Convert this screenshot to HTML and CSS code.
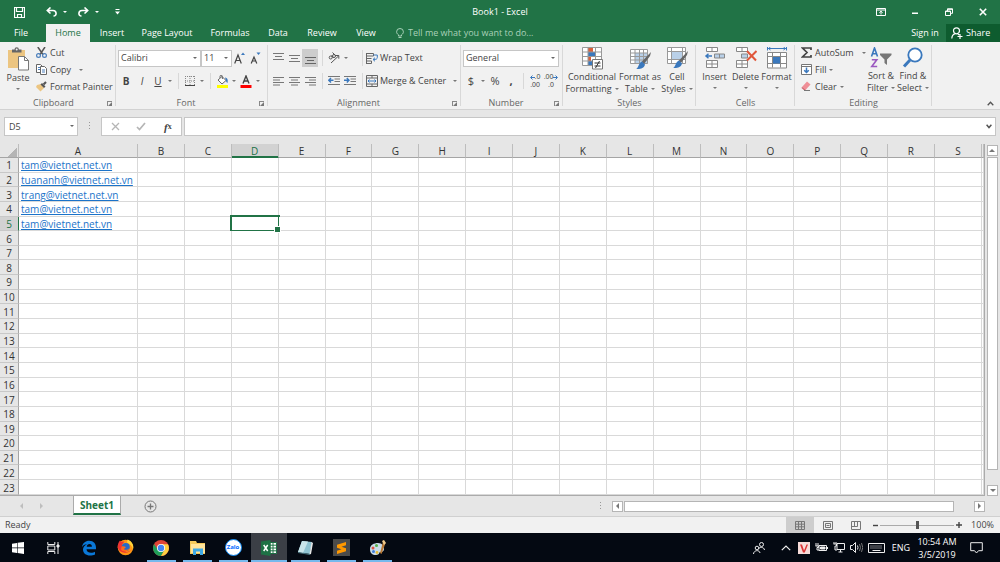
FILE: index.html
```html
<!DOCTYPE html>
<html lang="en">
<head>
<meta charset="utf-8">
<title>Book1 - Excel</title>
<link rel="stylesheet" href="styles.css">
</head>
<body>
<header class="titlebar">
  <div class="quick">
    <button class="q-save" aria-label="Save"><svg width="11" height="11" viewBox="0 0 11 11" fill="none" stroke="#fff"><path d="M.5 .5h10v10h-10zM2.500 .5v4h6v-4M3.500 10.500v-3h4v3" stroke-width="1.200"/></svg></button>
    <button class="q-undo" aria-label="Undo"><svg width="11" height="10" viewBox="0 0 11 10" fill="none" stroke="#fff" stroke-width="1.600"><path d="M4.500 .5L1.300 3.500l3.200 3M1.500 3.500H7c4 0 4 5.500 .5 5.500"/></svg></button>
    <span class="caret light"></span>
    <button class="q-redo" aria-label="Redo"><svg width="11" height="10" viewBox="0 0 11 10" fill="none" stroke="#fff" stroke-width="1.600"><path d="M6.500 .5l3.200 3-3.200 3M9.500 3.500H4c-4 0-4 5.500-.5 5.500"/></svg></button>
    <span class="caret light"></span>
    <button class="q-more" aria-label="Customize"><svg width="5" height="6" viewBox="0 0 5 6" fill="#fff"><path d="M.5 0h4v1h-4zM0 2.500h5L2.500 5.500z"/></svg></button>
  </div>
  <h1>Book1 - Excel</h1>
  <div class="winbtns">
    <button aria-label="Ribbon options"><svg width="10" height="8" viewBox="0 0 10 8" fill="none" stroke="#fff"><path d="M.5 .5h9v7h-9zM.5 2h9M5 6.500V3.200M3.300 4.800L5 3.200l1.700 1.600"/></svg></button>
    <button aria-label="Minimize"><svg width="8" height="8" viewBox="0 0 8 8"><path d="M1 4.500h6v1.500H1z" fill="#fff"/></svg></button>
    <button aria-label="Restore"><svg width="8" height="8" viewBox="0 0 8 8" fill="none" stroke="#fff"><path d="M.5 3h5v4.500h-5zM2.500 3V.8h5v4.500h-2M2.500 1.300h5M.5 3.400h5"/></svg></button>
    <button aria-label="Close"><svg width="8" height="8" viewBox="0 0 8 8" stroke="#fff" stroke-width="1.600"><path d="M.8 .8l6.400 6.400M7.200 .8L.8 7.200"/></svg></button>
  </div>
</header>

<nav class="tabs">
  <a href="#file" class="t-file">File</a>
  <a href="#home" class="active">Home</a>
  <a href="#insert" class="t-insert">Insert</a>
  <a href="#layout" class="t-layout">Page Layout</a>
  <a href="#formulas" class="t-formulas">Formulas</a>
  <a href="#data" class="t-data">Data</a>
  <a href="#review" class="t-review">Review</a>
  <a href="#view" class="t-view">View</a>
  <label class="tell"><svg width="8" height="11" viewBox="0 0 8 11" fill="none" stroke="#a9d1b9"><path d="M2.500 8V6.800C1 5.800 .6 4.800 .6 3.800a3.400 3.300 0 0 1 6.800 0c0 1-.4 2-1.900 3V8zM2.500 9.500h3"/></svg><input type="text" placeholder="Tell me what you want to do..." aria-label="Tell me what you want to do"></label>
  <a href="#signin" class="signin">Sign in</a>
  <button class="share"><svg width="12" height="12" viewBox="0 0 12 12" fill="none" stroke="#fff" stroke-width="1.200"><circle cx="5.500" cy="3.800" r="3"/><path d="M.8 11.500C1 8.500 2.500 7 4.500 6.700M6.500 6.600L8.200 8M6.500 9.500h5M9 7v5"/></svg>Share</button>
</nav>

<section class="ribbon">
  <div class="group g-clip">
    <div class="body">
      <button class="big paste"><svg width="23" height="24" viewBox="0 0 23 24"><path d="M1 3h17v18H1z" fill="#ecc581"/><path d="M5 2.500h2.500a2.200 2.200 0 0 1 4.400 0H14.500v3H5z" fill="#666"/><circle cx="9.700" cy="2.500" r="1" fill="#f1f1f1"/><path d="M11.500 9.500h6l4 4v9.500h-10z" fill="#fff" stroke="#777"/><path d="M17.500 9.500v4h4" fill="none" stroke="#777"/></svg><span>Paste</span><i class="caret"></i></button>
      <div class="stack">
        <button><svg width="11" height="11" viewBox="0 0 11 11" fill="none"><path d="M1.800 0L7 7.500M9 0L4 7.500" stroke="#555" stroke-width="1.500"/><circle cx="2.500" cy="8.500" r="1.900" stroke="#4a7ebb" stroke-width="1.200"/><circle cx="8.500" cy="8.500" r="1.900" stroke="#4a7ebb" stroke-width="1.200"/></svg>Cut</button>
        <button><svg width="11" height="11" viewBox="0 0 11 11" fill="#fff" stroke="#666"><path d="M.5 .5h4l2 2v6h-6z"/><path d="M2 3.500h2.500M2 5.500h2" stroke="#4a7ebb"/><path d="M4.500 2.500h4l2 2v6h-6z"/><path d="M6 6h3M6 8h3" stroke="#4a7ebb"/></svg>Copy<i class="caret c-copy"></i></button>
        <button><svg width="11" height="11" viewBox="0 0 11 11"><path d="M1 4l4-1 3 4-3.500 3.500L0 6z" fill="#ecc581"/><path d="M4.500 3.500l1.500-1.500 3.500 3.500-1.500 1.500z" fill="#555"/><path d="M7.500 3.500L10 1" stroke="#555" stroke-width="2.200"/></svg>Format Painter</button>
      </div>
    </div>
    <footer>Clipboard<b class="launch"></b></footer>
  </div>

  <div class="group g-font">
    <div class="body rows">
      <div class="row">
        <span class="pick p-font"><select aria-label="Font"><option>Calibri</option></select></span>
        <span class="pick p-size"><select aria-label="Font size"><option>11</option></select></span>
        <button class="w16" aria-label="Increase font size"><svg width="12" height="12" viewBox="0 0 12 12" fill="none"><path d="M.7 11.500L4 3l3.300 8.500M2 8.500h4" stroke="#444" stroke-width="1.200"/><path d="M7 3l2-2.500L11 3z" fill="#3a78bd"/></svg></button>
        <button class="w16" aria-label="Decrease font size"><svg width="12" height="12" viewBox="0 0 12 12" fill="none"><path d="M1.200 11.500L4 5l2.800 6.500M2.300 9h3.500" stroke="#444" stroke-width="1.200"/><path d="M6.500 .5h4L8.500 3z" fill="#3a78bd"/></svg></button>
      </div>
      <div class="row">
        <button class="w16 glyph"><b>B</b></button><button class="w16 glyph"><em>I</em></button><button class="w16 glyph"><u>U</u></button><button class="w8"><i class="caret"></i></button>
        <span class="sep"></span>
        <button class="w16"><svg width="10" height="10" viewBox="0 0 10 10" fill="none" stroke="#888"><path d="M.5 0v9M5 0v9M9.500 0v9M0 .5h10M0 5h10" stroke-dasharray="1 1"/><path d="M0 9.500h10" stroke="#444"/></svg></button><button class="w8"><i class="caret"></i></button>
        <span class="sep"></span>
        <button class="w16"><svg width="13" height="13" viewBox="0 0 13 13"><path d="M2 5l4-3.500 4 4L6 9z" fill="#fff" stroke="#666"/><path d="M4 3V1.500a1.200 1.200 0 0 1 2.400 0V4" fill="none" stroke="#666"/><path d="M9 2.500c3 .5 3 3 2.500 5.500C10 7 10 6 9.800 5z" fill="#3a78bd"/><path d="M1 10h11v3H1z" fill="#ffff00"/></svg></button><button class="w8"><i class="caret"></i></button>
        <button class="w16"><svg width="12" height="13" viewBox="0 0 12 13"><path d="M3 8.500L6 1l3 7.500M4 6h4" fill="none" stroke="#444" stroke-width="1.400"/><path d="M.5 10h11v3H.5z" fill="#f00"/></svg></button><button class="w8"><i class="caret"></i></button>
      </div>
    </div>
    <footer>Font<b class="launch"></b></footer>
  </div>

  <div class="group g-align">
    <div class="body rows">
      <div class="row">
        <button class="w16"><svg width="11" height="11" viewBox="0 0 11 11" stroke="#777"><path d="M0 .5h11M2 3.500h7M0 6.500h11"/></svg></button>
        <button class="w16"><svg width="11" height="11" viewBox="0 0 11 11" stroke="#777"><path d="M0 2.500h11M2 5.500h7M0 8.500h11"/></svg></button>
        <button class="w16 on"><svg width="11" height="11" viewBox="0 0 11 11" stroke="#666"><path d="M0 4.500h11M2 7.500h7M0 10.500h11"/></svg></button>
        <span class="sep"></span>
        <button class="w16"><svg width="12" height="12" viewBox="0 0 12 12" fill="none" stroke="#555"><path d="M3 11l7.500-7M7.500 3.500h3.300v3.200"/><circle cx="2.700" cy="5.500" r="1.500"/><path d="M3.500 3.500l2 2.500M4.500 .5l3.500 3.500"/><circle cx="6" cy="4" r="1.500"/></svg></button><button class="w8"><i class="caret"></i></button>
        <span class="sep s-wide"></span>
        <button class="lab"><svg width="12" height="11" viewBox="0 0 12 11" fill="none"><path d="M.5 .5h7v2.500h-7zM.5 5.500h5M.5 8h5v2.500h-5zM.5 0v11" stroke="#666"/><path d="M7.500 2h3.800v2.500c0 1.500-1 2-4 2M9 4.700L7 6.500l2 1.800" stroke="#3a78bd"/></svg>Wrap Text</button>
      </div>
      <div class="row">
        <button class="w16"><svg width="11" height="9" viewBox="0 0 11 9" stroke="#777"><path d="M0 .5h11M0 3h7M0 5.500h11M0 8h7"/></svg></button>
        <button class="w16"><svg width="11" height="9" viewBox="0 0 11 9" stroke="#777"><path d="M0 .5h11M2 3h7M0 5.500h11M2 8h7"/></svg></button>
        <button class="w16"><svg width="11" height="9" viewBox="0 0 11 9" stroke="#777"><path d="M0 .5h11M4 3h7M0 5.500h11M4 8h7"/></svg></button>
        <span class="sep"></span>
        <button class="w16"><svg width="12" height="10" viewBox="0 0 12 10" fill="none"><path d="M0 .5h12M6.500 3h5.500M6.500 5.500h5.500M0 8.500h12" stroke="#777"/><path d="M5.500 4.200H1M3 2L.8 4.200 3 6.500" stroke="#3a78bd" stroke-width="1.400"/></svg></button>
        <button class="w16"><svg width="12" height="10" viewBox="0 0 12 10" fill="none"><path d="M0 .5h12M6.500 3h5.500M6.500 5.500h5.500M0 8.500h12" stroke="#777"/><path d="M0 4.200h4.500M2.800 2L5 4.200 2.800 6.500" stroke="#3a78bd" stroke-width="1.400"/></svg></button>
        <span class="sep"></span>
        <button class="lab"><svg width="12" height="12" viewBox="0 0 12 12" fill="none"><path d="M.5 .5h11v11H.5zM.5 3h11M.5 9h11M6 0v3M6 9v3" stroke="#666"/><path d="M2 6h8M3.500 4.500L2 6l1.500 1.500M8.500 4.500L10 6 8.500 7.500" stroke="#3a78bd"/></svg>Merge &amp; Center<i class="caret c-merge"></i></button>
      </div>
    </div>
    <footer>Alignment<b class="launch"></b></footer>
  </div>

  <div class="group g-num">
    <div class="body rows">
      <div class="row"><span class="pick p-num"><select aria-label="Number format"><option>General</option></select></span></div>
      <div class="row">
        <button class="w16 sym">$</button><button class="w8"><i class="caret"></i></button><button class="w16 sym">%</button><button class="w16 sym"><b>,</b></button>
        <span class="sep"></span>
        <button class="w16 dec" aria-label="Increase decimal"><svg width="5" height="5" viewBox="0 0 5 5" fill="none" stroke="#3a78bd"><path d="M5 2.500H1M2.500 .5l-2 2 2 2"/></svg><span>.0</span><span>.00</span></button>
        <button class="w16 dec" aria-label="Decrease decimal"><span>.00</span><svg width="5" height="5" viewBox="0 0 5 5" fill="none" stroke="#3a78bd"><path d="M0 2.500h4M2.500 .5l2 2-2 2"/></svg><span>.0</span></button>
      </div>
    </div>
    <footer>Number<b class="launch"></b></footer>
  </div>

  <div class="group g-styles">
    <div class="body">
      <button class="big b-cond"><svg width="23" height="23" viewBox="0 0 23 23"><path d="M1.500 .5h19v18h-19z" fill="#fff"/><path d="M7 0h5v5H7zM7 10h3v4H7z" fill="#d9603b"/><path d="M7 5h8v5H7zM7 14h4v4H7z" fill="#3a78bd"/><path d="M1.500 .5h19v18h-19zM7 0v18M14.500 0v18M1 5h20M1 9.500h20M1 14h20" fill="none" stroke="#999"/><path d="M11.500 12.500h10v9.500h-10z" fill="#fff" stroke="#777"/><path d="M13.500 16h6M13.500 19h6M18.500 14l-4 7" stroke="#333"/></svg><span>Conditional</span><span>Formatting<i class="caret"></i></span></button>
      <button class="big b-table"><svg width="23" height="23" viewBox="0 0 23 23"><path d="M1.500 2.500h17v14h-17z" fill="#fff"/><path d="M6 6h13v11H6z" fill="#b9d0e8"/><path d="M1.500 2.500h17v14h-17zM6 2v14M10.500 2v14M14.500 2v14M1 6h18M1 9.500h18M1 13h18" fill="none" stroke="#999"/><path d="M22 5l-1 4-6 8-2.500-2z" fill="#666"/><path d="M13 14.500l3 3c-1 4-5 5-9 4.500 3-1 2-6 6-7.500z" fill="#3a78bd"/></svg><span>Format as</span><span>Table<i class="caret"></i></span></button>
      <button class="big b-cell"><svg width="23" height="23" viewBox="0 0 23 23"><path d="M1.500 .5h18v16h-18z" fill="#fff"/><path d="M5.500 4.500h11v8h-11z" fill="#b9d0e8"/><path d="M1.500 .5h18v16h-18zM5.500 0v16M16.500 0v16M1 4.500h19M1 12.500h19" fill="none" stroke="#999"/><path d="M22 4l-1 4-6 8-2.500-2z" fill="#666"/><path d="M13 13.500l3 3c-1 4-5 5-9 4.500 3-1 2-6 6-7.500z" fill="#3a78bd"/></svg><span>Cell</span><span>Styles<i class="caret"></i></span></button>
    </div>
    <footer>Styles</footer>
  </div>

  <div class="group g-cells">
    <div class="body">
      <button class="big"><svg width="22" height="23" viewBox="0 0 22 23" fill="#fff" stroke="#888"><path d="M2.500 .5h11v4h-11zM8 .5v4M2.500 13.500h11v7h-11zM8 13.500v7M2.500 17h11"/><path d="M10.500 7h10v4h-10zM15.500 7v4" fill="#b9d0e8"/><path d="M8 9H2.500M4.500 6.800L2 9l2.500 2.200" fill="none" stroke="#3a78bd" stroke-width="1.500"/></svg><span>Insert</span><i class="caret"></i></button>
      <button class="big"><svg width="22" height="23" viewBox="0 0 22 23" fill="#fff" stroke="#888"><path d="M1.500 .5h11v4h-11zM7 .5v4M1.500 13.500h11v7h-11zM7 13.500v7M1.500 17h11"/><path d="M6.500 7h6v4h-6z" fill="#b9d0e8"/><path d="M12 4l9 9.500M21.500 4L12 13.500" stroke="#e0563a" stroke-width="2"/></svg><span>Delete</span><i class="caret"></i></button>
      <button class="big"><svg width="22" height="23" viewBox="0 0 22 23" fill="#fff" stroke="#888"><path d="M1.500 5.500h19v15.500h-19zM6.500 5.500v15M14.500 5.500v15M1.500 9.500h19M1.500 16.500h19"/><path d="M7 10h7v6.500H7z" fill="#3a78bd" stroke="none"/><path d="M2 1.500h18M1.500 0v3.500M20.500 0v3.500M4.500 0L2.500 1.500l2 1.500M17.500 0l2 1.500-2 1.500" fill="none" stroke="#3a78bd"/></svg><span>Format</span><i class="caret"></i></button>
    </div>
    <footer>Cells</footer>
  </div>

  <div class="group g-edit">
    <div class="body">
      <div class="stack">
        <button><svg width="11" height="11" viewBox="0 0 11 11" fill="none" stroke="#444" stroke-width="1.700"><path d="M10 3V1H1.500L6 5.500 1.500 10H10V8"/></svg>AutoSum<i class="caret c-sum"></i></button>
        <button><svg width="11" height="11" viewBox="0 0 11 11" fill="#fff" stroke="#777"><path d="M.5 .5h10v10H.5zM.5 2.500h10"/><path d="M5.500 3.500v5M3.200 6.200l2.300 2.300 2.300-2.300" fill="none" stroke="#3a78bd" stroke-width="1.500"/></svg>Fill<i class="caret"></i></button>
        <button><svg width="11" height="11" viewBox="0 0 11 11"><path d="M1 6l5-5.500 3.500 3L4.500 9H3z" fill="#ef8f97"/><path d="M1 6l3.500 3H3L.5 7z" fill="#c9606a"/><path d="M3 9.500h6" stroke="#777"/></svg>Clear<i class="caret"></i></button>
      </div>
      <button class="big b-sort"><svg width="22" height="22" viewBox="0 0 22 22" fill="none"><path d="M1.500 9.500L4.500 1l3 8.500M2.500 6.800h4" stroke="#3a78bd" stroke-width="1.600"/><path d="M1.800 12.800h5L1.800 19.500h5.400" stroke="#9b59c0" stroke-width="1.600"/><path d="M10 6.500h11.500v1.500L17 12.500V18l-2.500-2v-3.500L10 8z" fill="#777"/></svg><span>Sort &amp;</span><span>Filter<i class="caret"></i></span></button>
      <button class="big b-find"><svg width="22" height="22" viewBox="0 0 22 22" fill="#fff" stroke="#3a78bd"><path d="M8 13l-6 6.500" stroke-width="3"/><circle cx="13" cy="8" r="6.700" stroke-width="1.800"/></svg><span>Find &amp;</span><span>Select<i class="caret"></i></span></button>
    </div>
    <footer>Editing</footer>
  </div>
  <button class="collapse" aria-label="Collapse the ribbon"><svg width="7" height="5" viewBox="0 0 7 5" fill="none" stroke="#555" stroke-width="1.300"><path d="M.7 4.200l2.800-3 2.800 3"/></svg></button>
</section>

<section class="formula">
  <span class="pick p-name"><select aria-label="Name box"><option>D5</option></select></span>
  <span class="dots"></span>
  <div class="fxbox">
    <button aria-label="Cancel"><svg width="9" height="9" viewBox="0 0 9 9" stroke="#b5b5b5" stroke-width="1.300"><path d="M1 1l7 7M8 1L1 8"/></svg></button>
    <button aria-label="Enter"><svg width="10" height="9" viewBox="0 0 10 9" fill="none" stroke="#b5b5b5" stroke-width="1.700"><path d="M1 5l2.500 2.500L9 1"/></svg></button>
    <button class="fx" aria-label="Insert function"><em>f</em><sub>x</sub></button>
  </div>
  <div class="fxinput"><input type="text" aria-label="Formula bar"><svg width="6" height="5" viewBox="0 0 6 5" fill="none" stroke="#555" stroke-width="1.500"><path d="M.6 .8L3 3.500 5.400 .8"/></svg></div>
</section>

<main class="sheetarea">
  <div class="tablewrap">
    <table class="sheet">
      <colgroup><col class="c-head"><col class="c-a"><col span="18"><col class="c-rest"></colgroup>
      <thead><tr id="letters"></tr></thead>
      <tbody id="cells"></tbody>
    </table>
  </div>
  <div class="vscroll">
    <button aria-label="Scroll up"><i class="tri up"></i></button>
    <span class="thumb"></span>
    <button aria-label="Scroll down"><i class="tri down"></i></button>
  </div>
</main>

<section class="sheettabs">
  <div class="tabnav"><i class="tri left"></i><i class="tri right"></i></div>
  <a href="#sheet1" class="sheettab">Sheet1</a>
  <button class="addsheet" aria-label="New sheet"><svg width="13" height="13" viewBox="0 0 13 13" fill="none" stroke="#777"><circle cx="6.500" cy="6.500" r="5.500"/><path d="M3.500 6.500h6M6.500 3.500v6" stroke-width="1.300"/></svg></button>
  <span class="dots d-tabs"></span>
  <div class="hscroll">
    <button aria-label="Scroll left"><i class="tri left"></i></button>
    <span class="thumb"></span>
    <button aria-label="Scroll right"><i class="tri right"></i></button>
  </div>
</section>

<section class="status">
  <span class="ready">Ready</span>
  <button class="on" aria-label="Normal"><svg width="10" height="9" viewBox="0 0 10 9" fill="none" stroke="#777"><path d="M.5 .5h9v8h-9zM3.500 0v9M6.500 0v9M0 3.200h10M0 5.800h10"/></svg></button>
  <button aria-label="Page layout"><svg width="10" height="9" viewBox="0 0 10 9" fill="none" stroke="#777"><path d="M.5 .5h9v8h-9zM2.500 2.500h5v4h-5zM3.500 4.500h3"/></svg></button>
  <button aria-label="Page break preview"><svg width="10" height="9" viewBox="0 0 10 9" fill="none" stroke="#777"><path d="M.5 .5h9v8h-9zM3.500 0v5.500M6.500 0v5.500M.5 5.500h6"/></svg></button>
  <button class="zoombtn" aria-label="Zoom out"><svg width="5" height="5" viewBox="0 0 5 5" stroke="#444" stroke-width="1.400"><path d="M0 2.500h5"/></svg></button>
  <input type="range" min="0" max="100" value="50" aria-label="Zoom">
  <button class="zoombtn" aria-label="Zoom in"><svg width="6" height="6" viewBox="0 0 6 6" stroke="#444" stroke-width="1.400"><path d="M0 3h6M3 0v6"/></svg></button>
  <span class="percent">100%</span>
</section>

<footer class="taskbar">
  <button aria-label="Start"><svg width="12" height="12" viewBox="0 0 12 12" fill="#fff"><path d="M0 1.700l5-.8v4.700H0zM5.600 .8L12 0v5.600H5.600zM0 6.200h5v4.800l-5-.8zM5.600 6.200H12V12l-6.400-.9z"/></svg></button>
  <button aria-label="Task view"><svg width="13" height="12" viewBox="0 0 13 12" fill="none" stroke="#eee"><path d="M.8 0v2.500h7V0M.8 12V9.500h7V12M.8 4h7v4h-7zM11 0v12"/><path d="M10 3h2v2h-2z" fill="#eee"/></svg></button>
  <button aria-label="Edge"><svg width="16" height="16" viewBox="0 0 16 16"><path d="M1 7C1.500 3 4.500 .7 8.200 .7c4.500 0 6.800 3 6.800 7v1.600H5.500c.2 2.600 2.500 3.500 4.500 3.500 1.600 0 2.800-.4 4-1v2.800c-1.500 .7-3 1-5 1-4 0-7-2.200-7-6C2 7.500 3.500 5.300 6 4.300 3.500 4.500 2 5.500 1 7zm4.700-.3h5.200c0-1.600-.8-2.600-2.400-2.600S6 5.200 5.700 6.700z" fill="#0a78d8"/></svg></button>
  <button aria-label="Firefox"><svg width="17" height="17" viewBox="0 0 17 17"><circle cx="8.500" cy="8.500" r="7.800" fill="#ff9614"/><path d="M.7 8.500C.7 5 2 2.500 3 1.500L4.500 3c1-.5 2-.6 3-.4L5.500 5C4 7 6 12 10 13c2-.3 4-2 5-3.500A7.800 7.800 0 0 1 .7 8.500z" fill="#ee3333"/><circle cx="8.800" cy="8" r="4" fill="#2469c8"/><path d="M4.500 7.500c2-.5 3 0 4.500 .5L7 10c1 1.500 4 1 5.500-1-.5 3.500-6.500 5-8.500 1.500z" fill="#ff6a18"/><path d="M10.500 .5C15 2 17 6 16 10.500 15.500 7 13 5 10 3.500z" fill="#ffd43a"/></svg></button>
  <button class="run" aria-label="Chrome"><svg width="16" height="16" viewBox="0 0 16 16"><circle cx="8" cy="8" r="8" fill="#de4437"/><path d="M1.100 4A8 8 0 0 0 8 16l3.500-6H5z" fill="#1e9e58"/><path d="M8 16a8 8 0 0 0 7-11.800H8L11.500 10z" fill="#fdcf41"/><circle cx="8" cy="8" r="4" fill="#fff"/><circle cx="8" cy="8" r="3.200" fill="#4285f4"/></svg></button>
  <button class="run" aria-label="Explorer"><svg width="17" height="15" viewBox="0 0 17 15"><path d="M1 1h6l1 2h8v11H1z" fill="#f4c95b"/><path d="M2 4h14v9H2z" fill="#ffe39a"/><path d="M4 8.500h10V15h-3v-3.500H7V15H4z" fill="#3fa9e6"/></svg></button>
  <button class="run" aria-label="Zalo"><span class="zalo">Zalo</span></button>
  <button class="run current" aria-label="Excel"><svg width="16" height="16" viewBox="0 0 16 16"><path d="M9 2.500h6.500v11H9z" fill="#fff" stroke="#1e7145"/><path d="M12 2.500v11M9 5.200h6M9 8h6M9 10.800h6" stroke="#1e7145"/><path d="M0 1.500L9.500 0v16L0 14.500z" fill="#1e7145"/><path d="M2.700 5l4 6M6.700 5l-4 6" stroke="#fff" stroke-width="1.500"/></svg></button>
  <button class="run" aria-label="Notepad"><svg width="16" height="15" viewBox="0 0 16 15"><path d="M5 1l10 1-2 12-12-2z" fill="#8fc3d2"/><path d="M5 1l6 .6L6 13l-5-1z" fill="#c9e5eb"/><path d="M14.500 2L16 3l-2 11-1.500 .5z" fill="#e8e8e8"/><path d="M1 12l12 2v1L1 13z" fill="#47717d"/></svg></button>
  <button class="run" aria-label="Sublime Text"><svg width="17" height="17" viewBox="0 0 17 17"><path d="M0 0h17v17H0z" fill="#4b4b4b"/><path d="M13 3v3.200L8.500 7.700 13 9.300v3L4 15v-3.200l4.500-1.500L4 8.700V5.800z" fill="#ff9800"/></svg></button>
  <button class="run" aria-label="Paint"><svg width="17" height="16" viewBox="0 0 17 16"><path d="M1 9c0-4 4-6 8-6s6 3 6 6-3 3-4 3 0 3-4 3-6-2-6-6z" fill="#c9dce9"/><circle cx="4" cy="8" r="1.500" fill="#d54"/><circle cx="7.500" cy="5.500" r="1.500" fill="#58b04c"/><circle cx="4.500" cy="11.500" r="1.500" fill="#3f7dd8"/><circle cx="8" cy="12.500" r="1.400" fill="#e8bd35"/><path d="M14.500 0l2 3-4 11-1.500-1z" fill="#b87835"/><path d="M13 1l2-1 2 3-2 2z" fill="#edc98c"/></svg></button>
  <div class="tray">
    <svg class="people" width="12" height="12" viewBox="0 0 12 12" fill="none" stroke="#eee"><circle cx="8.500" cy="2.500" r="2"/><path d="M5.500 7c.5-2 5.500-2.500 6 1"/><circle cx="4" cy="6" r="1.800"/><path d="M.5 12c.2-4 6-4.500 6.500-1"/></svg>
    <svg class="up" width="10" height="6" viewBox="0 0 10 6" fill="none" stroke="#eee" stroke-width="1.200"><path d="M.8 5.200L5 1l4.200 4.200"/></svg>
    <svg width="12" height="12" viewBox="0 0 12 12"><path d="M0 0h12v12H0z" fill="#f7dcd9"/><path d="M2 2.500h2l2 6 2.500-6H10L6.800 10.500H5z" fill="#d33"/></svg>
    <svg width="13" height="9" viewBox="0 0 13 9" fill="none" stroke="#eee"><path d="M4 2.500h7.500v5H4zM12.500 4v2M1 0v3M3 0v3M.5 3h3v1.500H2V7h2"/><path d="M5.500 4h4.500v2H5.500z" fill="#eee"/></svg>
    <svg width="12" height="11" viewBox="0 0 12 11" fill="none" stroke="#eee"><path d="M4 1.500h7.500v6H4zM5.500 10h4M7.500 7.500V10M1 0v2M3 0v2M.5 2h3v2H2v4h2"/></svg>
    <svg width="13" height="11" viewBox="0 0 13 11" fill="none" stroke="#eee"><path d="M.5 3.500h2l3-3v10l-3-3h-2z"/><path d="M7.500 3.500q1 2 0 4"/><path d="M9.500 2q2 3.500 0 7M11.500 1q2.500 4.500 0 9" stroke="#777"/></svg>
    <svg width="17" height="10" viewBox="0 0 17 10" fill="none" stroke="#eee"><path d="M.5 .5h16v9H.5z"/><path d="M2.500 3h12M2.500 5h12" stroke-dasharray="1 1"/><path d="M4.500 7.500h8"/></svg>
    <span class="lang">ENG</span>
    <time>10:54 AM<br>3/5/2019</time>
    <svg class="note" width="13" height="12" viewBox="0 0 13 12" fill="none" stroke="#eee"><path d="M.7 .7h11.600v8H8.500L6.500 11l-2-2.300H.7z"/></svg>
  </div>
</footer>
<script src="sheet.js"></script>
</body>
</html>
```

FILE: styles.css
```css
* { box-sizing: border-box; }
body {
  margin: 0;
  height: 100vh;
  display: flex;
  flex-direction: column;
  overflow: hidden;
  font: 9px/12px "Open Sans", "Noto Sans", sans-serif;
  color: #444;
  background: #e6e6e6;
}
button, input, select { font: inherit; color: inherit; }
button { border: 0; padding: 0; background: none; display: flex; align-items: center; justify-content: center; }
a { color: inherit; text-decoration: none; }
svg { display: block; flex: none; }

.caret { width: 0; height: 0; border: 2px solid transparent; border-top-color: #777; border-bottom: 0; flex: none; }
.caret.light { border-top-color: #fff; }

/* title bar */
.titlebar { height: 24px; background: #217346; display: grid; grid-template-columns: 1fr auto 1fr; align-items: center; }
.titlebar h1 { margin: 0; font-size: 9px; font-weight: 400; color: #fff; }
.quick { display: flex; align-items: center; padding-left: 14px; }
.q-undo { margin-left: 21px; margin-right: 6px; }
.q-redo { margin-left: 11px; margin-right: 6px; }
.q-more { margin-left: 16px; }
.winbtns { display: flex; justify-content: flex-end; }
.winbtns button { width: 34px; height: 22px; }

/* ribbon tabs */
.tabs { height: 18px; background: #217346; color: #fff; display: flex; align-items: stretch; line-height: 18px; text-align: center; }
.t-file { width: 42px; }
.tabs .active { width: 44px; margin-left: 4px; background: #f1f1f1; color: #217346; }
.t-insert { width: 44px; }
.t-layout { width: 66px; }
.t-formulas { width: 60px; }
.t-data { width: 36px; }
.t-review { width: 52px; }
.t-view { width: 36px; }
.tell { display: flex; align-items: center; gap: 4px; padding-left: 12px; flex: 1; }
.tell input { border: 0; background: none; padding: 0; width: 160px; outline: 0; }
.tell input::placeholder { color: #a9d1b9; opacity: 1; }
.signin { width: 42px; }
.share { background: #0e5c2f; color: #fff; width: 54px; gap: 3px; justify-content: flex-start; padding-left: 5px; }

/* ribbon */
.ribbon { display: flex; background: #f1f1f1; border-bottom: 1px solid #d2d2d2; height: 68px; }
.group { display: flex; flex-direction: column; position: relative; padding-top: 2px; flex: none; }
.group::after { content: ""; position: absolute; right: 0; top: 3px; bottom: 3px; width: 1px; background: #d8d8d8; }
.group footer { display: flex; justify-content: center; line-height: 12px; color: #666; }
.group .body { flex: 1; display: flex; align-items: flex-start; }
.launch { position: absolute; right: 4px; bottom: 3px; width: 5px; height: 5px; border-top: 1px solid #888; border-left: 1px solid #888; }
.launch::after { content: ""; position: absolute; right: 0; bottom: 0; border: 2px solid transparent; border-right-color: #777; border-bottom-color: #777; }
.g-clip { width: 116px; }
.g-clip footer { padding-left: 44px; justify-content: flex-start; padding-left: 33px; }
.g-font { width: 152px; }
.g-font footer, .g-align footer { padding-right: 12px; }
.g-align { width: 193px; }
.g-num { width: 102px; }
.g-num footer { padding-right: 12px; }
.g-styles { width: 133px; }
.g-cells { width: 99px; }
.g-edit { width: 137px; }
.big { flex-direction: column; justify-content: flex-start; padding-top: 3px; line-height: 12px; white-space: nowrap; }
.big svg { margin-bottom: 1px; }
.big > .caret { margin-top: 4px; }
.big span { display: flex; align-items: center; gap: 3px; }
.paste { width: 36px; }
.stack button { height: 17px; gap: 3px; white-space: nowrap; }
.stack .c-copy { margin-left: 5px; }
.stack .c-sum { margin-left: 5px; }
.group .rows { flex-direction: column; gap: 5px; padding: 5px 2px 0; }
.row { display: flex; height: 18px; align-items: center; }
.w16 { width: 16px; height: 18px; }
.w8 { width: 8px; height: 18px; }
.sep { width: 1px; height: 16px; background: #d8d8d8; margin: 0 3px 0 4px; }
.glyph { font-size: 10px; }
.on { background: #cdcdcd; }
.sym { font-size: 11px; }
.lab { gap: 2px; white-space: nowrap; }
.c-merge { margin-left: 5px; }
.s-wide { margin-left: 12px; }
.dec { flex-wrap: wrap; align-content: center; font: 7px/8px "Liberation Sans", sans-serif; }

.pick { position: relative; display: block; height: 17px; }
.pick select { appearance: none; width: 100%; height: 100%; border: 1px solid #c6c6c6; border-radius: 0; background: #fff; padding: 0 2px; }
.pick::after { content: ""; position: absolute; right: 4px; top: 7px; border: 2px solid transparent; border-top-color: #666; border-bottom: 0; }
.p-font { width: 83px; }
.p-size { width: 31px; }
.p-num { width: 96px; }
.b-cond { width: 58px; }
.b-table { width: 38px; }
.b-cell { width: 36px; }
.g-cells .body { padding-left: 3px; }
.g-cells .big { width: 31px; }
.g-edit .stack { width: 62px; }
.g-edit .body { padding-left: 6px; }
.b-sort { width: 36px; }
.b-find { width: 28px; }
.collapse { margin-left: auto; width: 20px; align-self: flex-end; height: 12px; }

/* formula bar */
.formula { display: flex; align-items: center; padding: 7px 4px; height: 33px; }
.p-name { width: 74px; height: 19px; }
.p-name select { padding-left: 4px; }
.p-name::after { top: 8px; }
.dots { width: 1px; height: 9px; margin: 0 11px; background: repeating-linear-gradient(#999 0 1px, transparent 1px 3px); }
.fxbox { display: flex; height: 19px; width: 81px; border: 1px solid #c6c6c6; background: #fff; margin-right: 2px; }
.fxbox button { flex: 1; }
.fxbox .fx { font: 700 11px/12px "Liberation Serif", serif; }
.fx sub { font-size: 8px; line-height: 8px; }
.fxinput { flex: 1; display: flex; align-items: center; height: 19px; border: 1px solid #c6c6c6; background: #fff; padding-right: 3px; }
.fxinput input { flex: 1; border: 0; outline: 0; padding: 0 4px; background: none; }

/* worksheet grid */
.sheetarea { flex: 1; display: flex; min-height: 0; padding-top: 1px; }
.tablewrap { flex: 1; border-right: 1px solid #ababab; border-bottom: 1px solid #ababab; }
.sheet { width: 100%; height: 100%; table-layout: fixed; border-collapse: separate; border-spacing: 0; }
.c-head { width: 19px; }
.c-a { width: 119px; }
.c-rest { width: 2px; }
.sheet th, .sheet td { padding: 1px 0 0; font-size: 10px; font-weight: 400; line-height: 12px; height: 14px; white-space: nowrap; }
.sheet th { color: #333; }
.sheet thead th { background: #e6e6e6; border-right: 1px solid #bdbdbd; border-bottom: 1px solid #a5a5a5; }
.sheet tbody th { background: #e6e6e6; border-right: 1px solid #a5a5a5; border-bottom: 1px solid #c8c8c8; }
.sheet td { background: #fff; border-right: 1px solid #d9d9d9; border-bottom: 1px solid #d9d9d9; position: relative; }
.sheet thead .sel { background: #d2d2d2; color: #217346; border-bottom-color: #217346; box-shadow: inset 0 -1px #217346; }
.sheet tbody .sel { background: #d2d2d2; color: #217346; border-right-color: #217346; }
.sheet thead .corner { background: linear-gradient(135deg, transparent 50%, #b5b5b5 50%) 7px 4px / 10px 9px no-repeat, #e6e6e6; }
.sheet a { color: #1b73c9; text-decoration: underline; padding-left: 2px; }
.sheet .cursor::after { content: ""; position: absolute; inset: -2px; border: 2px solid #217346; }
.sheet .cursor::before { content: ""; position: absolute; right: -3px; bottom: -3px; width: 5px; height: 5px; background: #217346; border: 1px solid #fff; z-index: 1; }

.tri { width: 0; height: 0; border: 3px solid transparent; }
.tri.up { border-bottom-color: #777; border-top: 0; }
.tri.down { border-top-color: #777; border-bottom: 0; }
.tri.left { border-right-color: #777; border-left: 0; }
.tri.right { border-left-color: #777; border-right: 0; }
.vscroll { width: 15px; padding: 1px 2px 0 2px; display: flex; flex-direction: column; gap: 1px; }
.vscroll button, .hscroll button { width: 11px; height: 11px; background: #fff; border: 1px solid #b5b5b5; flex: none; }
.vscroll .thumb { flex: 1; background: #fff; border: 1px solid #b5b5b5; margin-bottom: 14px; }

/* sheet tabs */
.sheettabs { height: 21px; display: flex; align-items: center; padding-right: 15px; border-bottom: 1px solid #d0d0d0; }
.tabnav { width: 73px; display: flex; gap: 17px; padding-left: 20px; opacity: .35; }
.sheettab { width: 48px; align-self: flex-start; height: 19px; line-height: 19px; font-size: 10px; text-align: center; background: #fff; color: #217346; font-weight: 700; border: 1px solid #ababab; border-top: 0; border-bottom: 2px solid #217346; }
.addsheet { margin-left: 23px; margin-right: auto; }
.hscroll { width: 373px; display: flex; gap: 1px; }
.hscroll .thumb { flex: 1; background: #fff; border: 1px solid #b5b5b5; margin-right: 19px; }

/* status bar */
.status { height: 16px; display: flex; align-items: center; background: #f1f1f1; padding-right: 6px; }
.ready { padding-left: 5px; margin-right: auto; }
.status button { width: 28px; height: 16px; }
.status .zoombtn { width: 10px; }
.status input { appearance: none; width: 74px; height: 10px; margin: 0; background: linear-gradient(#aaa, #aaa) center / 100% 1px no-repeat; }
.status input::-webkit-slider-thumb { appearance: none; width: 3px; height: 8px; background: #555; }
.percent { width: 30px; text-align: right; }

/* task bar */
.taskbar { height: 29px; display: flex; background: #040912; color: #fff; }
.taskbar button { width: 36px; height: 29px; position: relative; }
.taskbar button:first-child { width: 35px; }
.run::after { content: ""; position: absolute; left: 4px; right: 3px; bottom: 0; height: 2px; background: #76b9ed; }
.current { background: #3b3f46; }
.run.current::after { left: 0; right: 0; }
.zalo { width: 17px; height: 17px; border-radius: 50%; background: #fff; border: 1px solid #0b86f0; color: #0068ff; font: 700 6px/15px "Open Sans", sans-serif; }
.tray { margin-left: auto; display: flex; align-items: center; gap: 5px; padding-right: 17px; }
.people { margin-right: 11px; }
.up { margin-right: 2px; }
.lang { margin-left: 2px; }
.tray time { width: 44px; text-align: center; line-height: 13px; white-space: nowrap; }
.note { margin-left: 6px; }
```

FILE: sheet.js
```js
const columns = "ABCDEFGHIJKLMNOPQRS".split("");
const mails = ["tam@vietnet.net.vn", "tuananh@vietnet.net.vn", "trang@vietnet.net.vn", "tam@vietnet.net.vn", "tam@vietnet.net.vn"];
const selected = { column: "D", row: 5 };

document.getElementById("letters").innerHTML =
  '<th class="corner"></th>' +
  columns.map(c => `<th scope="col" class="${c === selected.column ? "sel" : ""}">${c}</th>`).join("") +
  "<th></th>";

let rows = "";
for (let r = 1; r <= 23; r++) {
  rows += `<tr><th scope="row" class="${r === selected.row ? "sel" : ""}">${r}</th>`;
  for (const c of columns) {
    const mail = c === "A" && mails[r - 1];
    const cursor = c === selected.column && r === selected.row;
    rows += `<td${cursor ? ' class="cursor"' : ""}>${mail ? `<a href="mailto:${mail}">${mail}</a>` : ""}</td>`;
  }
  rows += "<td></td></tr>";
}
document.getElementById("cells").innerHTML = rows;
```
